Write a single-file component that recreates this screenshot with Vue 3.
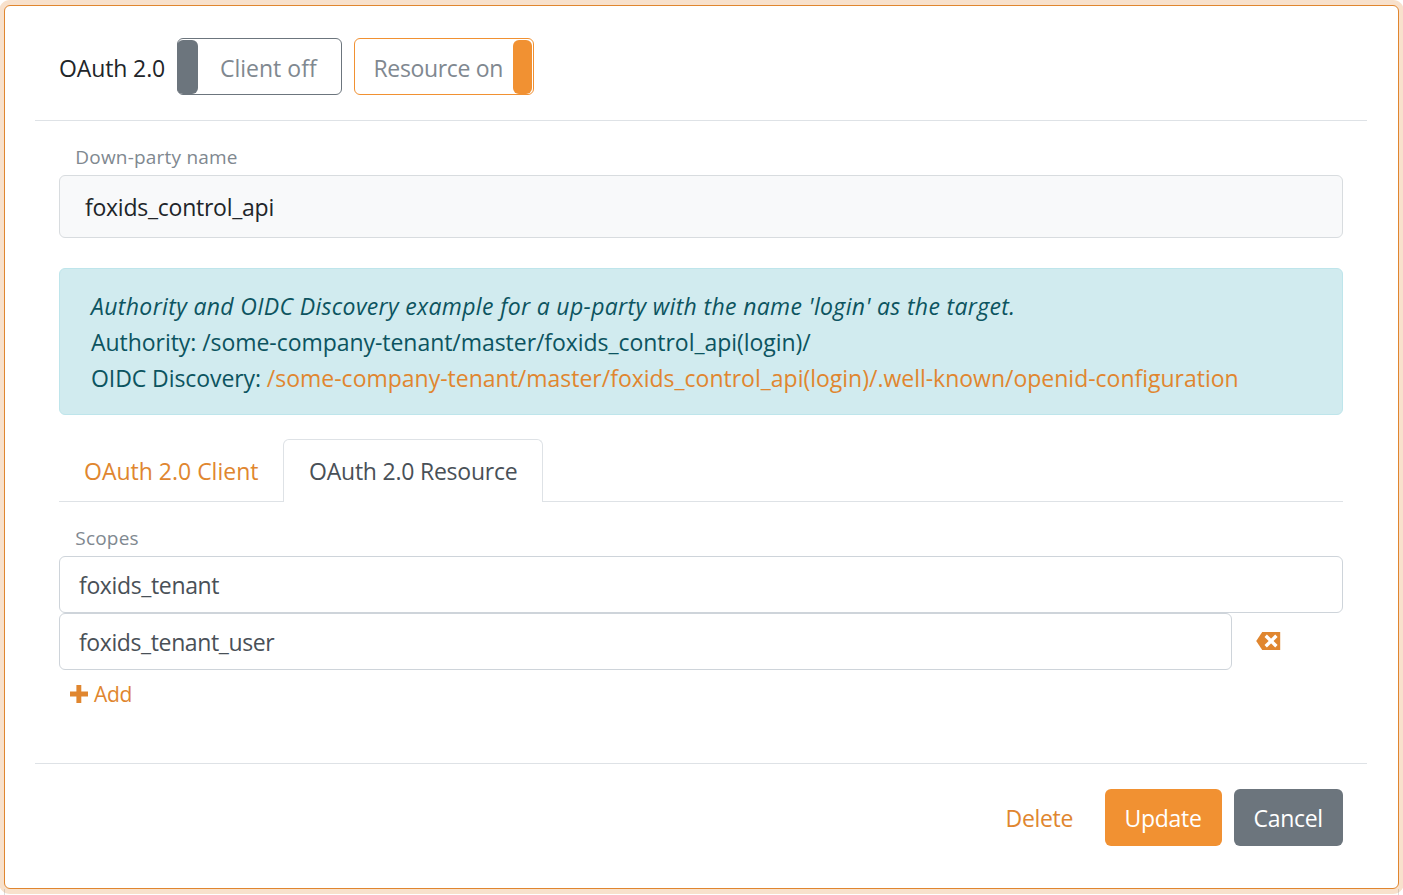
<script setup>
import { ref } from 'vue'

const partyName = 'foxids_control_api'
const path = '/some-company-tenant/master/foxids_control_api(login)/'
const tab = ref('resource')
</script>

<template>
  <div class="page">
    <section class="card">
      <header class="head">
        <span class="title t-title">OAuth 2.0</span>
        <button class="toggle off"><i class="knob"></i><span class="t-off">Client off</span></button>
        <button class="toggle on"><span class="t-on">Resource on</span><i class="knob"></i></button>
      </header>

      <main class="body">
        <label class="label t-down">Down-party name</label>
        <div class="readonly"><span class="t-api">{{ partyName }}</span></div>

        <div class="info">
          <div><em class="t-note">Authority and OIDC Discovery example for a up-party with the name 'login' as the target.</em></div>
          <div><span class="t-auth">Authority: {{ path }}</span></div>
          <div><span class="t-oidc">OIDC Discovery: </span><a class="link t-link">{{ path }}.well-known/openid-configuration</a></div>
        </div>

        <nav class="tabs">
          <a class="tab tab-client" :class="{ active: tab === 'client' }" @click="tab = 'client'"><span class="t-tab1">OAuth 2.0 Client</span></a>
          <a class="tab tab-resource" :class="{ active: tab === 'resource' }" @click="tab = 'resource'"><span class="t-tab2">OAuth 2.0 Resource</span></a>
        </nav>

        <label class="label scopes t-scopes">Scopes</label>
        <div class="input"><span class="t-tenant">foxids_tenant</span></div>
        <div class="row">
          <div class="input short"><span class="t-user">foxids_tenant_user</span></div>
          <svg class="erase" viewBox="0 0 25 18" width="25" height="18">
            <path d="M6.2 0H24.2V18H6.2L0.2 9Z" fill="#e0862f" />
            <path d="M9.7 3.8L20.4 14.2M20.4 3.8L9.7 14.2" stroke="#fff" stroke-width="3.4" fill="none" />
          </svg>
        </div>
        <a class="add">
          <svg viewBox="0 0 18 18" width="18" height="18"><path d="M6.4 0H11.3V6.6H18V11.4H11.3V18H6.4V11.4H0V6.6H6.4Z" fill="#e0862f" /></svg>
          <span class="t-add">Add</span>
        </a>
      </main>

      <footer class="foot">
        <a class="link delete t-delete">Delete</a>
        <button class="btn update"><span class="t-update">Update</span></button>
        <button class="btn cancel"><span class="t-cancel">Cancel</span></button>
      </footer>
    </section>
    <div class="edge"></div>
  </div>
</template>

<style>
html, body { background: #fff; overflow: hidden; }
</style>

<style scoped>
* { box-sizing: border-box; }
.page {
  height: 895px;
  padding: 5px 4px 0;
  overflow: hidden;
  font-family: "Open Sans", "Noto Sans", sans-serif;
  font-size: 23px;
  line-height: 36px;
  color: #212529;
  white-space: nowrap;
}
.card {
  height: 884px;
  border: 1px solid #e0862f;
  border-radius: 6px;
  padding: 0 31px 0 30px;
  box-shadow: 0 0 0 5px #f8e1cc;
  background: #fff;
}
.edge {
  position: relative;
  height: 6px;
  border: solid rgba(120, 120, 120, 0.25);
  border-width: 0 1px;
}
button { font: inherit; padding: 0; margin: 0; }
span { white-space: pre; }
.head {
  display: flex;
  height: 115px;
  padding: 32px 24px 0;
  border-bottom: 1px solid #dee2e6;
}
.title { width: 118px; line-height: 60px; }
.toggle {
  display: flex;
  height: 57px;
  border: 1px solid;
  border-radius: 6px;
  background: #fff;
  padding-top: 1px;
  line-height: 56px;
}
.toggle span { color: #808890; }
.knob { height: 54px; border-radius: 6px; }
.off { width: 165px; border-color: #6c757d; margin-right: 12px; }
.off .knob { width: 21px; margin: 0 22px 0 -1px; background: #6c757d; }
.on { width: 180px; border-color: #f19132; padding-left: 18.5px; justify-content: space-between; }
.on .knob { width: 19px; margin-right: 1px; background: #f19132; }
.body { padding: 20px 24px 0; height: 643px; border-bottom: 1px solid #dee2e6; }
.label {
  display: block;
  height: 34px;
  padding-left: 16.3px;
  font-size: 19px;
  line-height: 33px;
  color: #808890;
}
.readonly {
  height: 63px;
  padding-left: 25px;
  border: 1px solid #d8dcdf;
  border-radius: 6px;
  background: #f8f9fa;
  line-height: 62px;
}
.info {
  height: 147px;
  margin-top: 30px;
  padding: 19px 31px 0;
  border: 1px solid #bee5eb;
  border-radius: 6px;
  background: #d1ebef;
  color: #0c5460;
}
.link { color: #e0862f; }
.tabs {
  display: flex;
  height: 63px;
  margin-top: 24px;
  border-bottom: 1px solid #dee2e6;
}
.tab {
  height: 63px;
  border: 1px solid transparent;
  border-bottom: 0;
  border-radius: 6px 6px 0 0;
  padding-left: 25px;
  line-height: 63px;
  color: #e0862f;
}
.tab-client { width: 224px; padding-left: 24px; }
.tab-resource { width: 260px; }
.tab.active { border-color: #dee2e6; background: #fff; color: #495057; }
.scopes { margin-top: 20px; }
.input {
  height: 57px;
  padding-left: 19px;
  border: 1px solid #ced4da;
  border-radius: 6px;
  line-height: 56px;
  color: #495057;
}
.row { display: flex; }
.short { width: 1173px; }
.erase { margin: 19px 0 0 24px; }
.add {
  display: flex;
  align-items: center;
  gap: 6px;
  height: 48px;
  padding-left: 11px;
  font-size: 21px;
  color: #e0862f;
}
.foot { display: flex; justify-content: flex-end; padding: 25px 24px 0; }
.delete { width: 99.5px; line-height: 58px; }
.btn {
  height: 57px;
  border: 0;
  border-radius: 6px;
  color: #fff;
  text-align: left;
  line-height: 58px;
  padding-left: 19.5px;
}
.update { width: 117px; margin-right: 12px; background: #f19132; }
.cancel { width: 109px; background: #6c757d; }

/* per-string tracking */
.t-title { letter-spacing: -0.12px; }
.t-on { letter-spacing: -0.34px; }
.t-down { letter-spacing: 0.2px; }
.t-api { letter-spacing: -0.25px; }
.t-note { letter-spacing: 0.345px; }
.t-auth { letter-spacing: -0.05px; }
.t-oidc { letter-spacing: -0.08px; }
.t-link { letter-spacing: -0.01px; }
.t-tab2 { letter-spacing: -0.22px; }
.t-scopes { letter-spacing: 0.2px; }
.t-tenant { letter-spacing: -0.36px; }
.t-user { letter-spacing: -0.39px; }
.t-add { letter-spacing: -0.3px; }
.t-delete, .t-update, .t-cancel { letter-spacing: -0.3px; }
</style>
